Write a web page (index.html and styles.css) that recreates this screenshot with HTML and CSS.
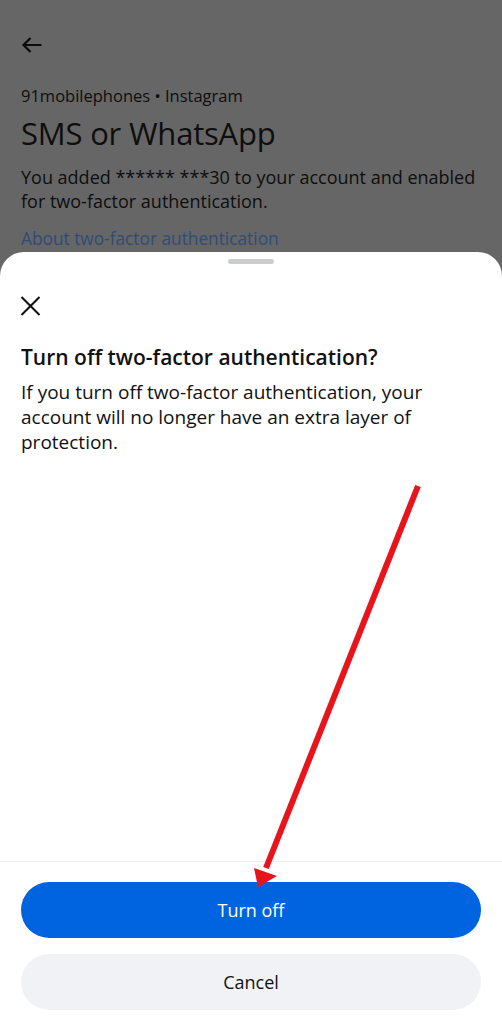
FILE: index.html
```html
<!DOCTYPE html>
<html lang="en">
<head>
    <meta charset="UTF-8">
    <meta name="viewport" content="width=device-width, initial-scale=1.0">
    <title>SMS or WhatsApp</title>
    <link rel="stylesheet" href="styles.css">
</head>
<body>

    <div class="screen">
        <div class="behind">
            <div class="back">
                <svg width="24" height="24" viewBox="0 0 24 24">
                    <path d="M21.5 12H3.5M10.5 5L3.5 12L10.5 19" fill="none" stroke="#0c0c0c" stroke-width="2.2"/>
                </svg>
            </div>
            <p class="crumb">91mobilephones • Instagram</p>
            <h1>SMS or WhatsApp</h1>
            <p class="desc">You added ****** ***30 to your account and enabled for two-factor authentication.</p>
            <p class="link">About two-factor authentication</p>
        </div>

        <div class="sheet">
            <div class="handle"></div>
            <div class="close">
                <svg width="21" height="20" viewBox="0 0 21 20">
                    <path d="M1.5 1L19.5 19M19.5 1L1.5 19" fill="none" stroke="#111" stroke-width="2.1"/>
                </svg>
            </div>
            <h2>Turn off two-factor authentication?</h2>
            <p class="sheet-text">If you turn off two-factor authentication, your account will no longer have an extra layer of protection.</p>

            <div class="spacer"></div>

            <div class="actions">
                <button class="btn primary">Turn off</button>
                <button class="btn secondary">Cancel</button>
            </div>
        </div>

        <svg class="annotation" width="502" height="1024" viewBox="0 0 502 1024">
            <line x1="418" y1="486" x2="266" y2="868" stroke="#e8141b" stroke-width="6"/>
            <polygon points="254,868 277,876 258,887" fill="#e8141b"/>
        </svg>
    </div>

</body>
</html>
```

FILE: styles.css
```css
body {
    margin: 0;
    font-family: "Open Sans", Roboto, sans-serif;
    color: #111;
}

.screen {
    position: relative;
    width: 502px;
    height: 1024px;
    background-color: #666666;
    display: flex;
    flex-direction: column;
    overflow: hidden;
}

.behind {
    padding: 33px 21px 0 21px;
    color: #0e0e0e;
}

.back {
    height: 24px;
    margin-left: -1px;
}

.crumb {
    margin: 29px 0 0 0;
    font-size: 16.5px;
    line-height: 20px;
}

h1 {
    margin: 9px 0 0 0;
    font-size: 31px;
    line-height: 36px;
    font-weight: 400;
    letter-spacing: -0.2px;
}

.desc {
    margin: 14px 0 0 0;
    font-size: 18px;
    line-height: 24px;
}

.link {
    margin: 14px 0 0 0;
    font-size: 17.3px;
    line-height: 24px;
    color: #2f4c77;
}

.sheet {
    flex: 1;
    margin-top: 1px;
    background-color: #fff;
    border-radius: 24px 24px 0 0;
    display: flex;
    flex-direction: column;
    padding: 0 21px;
}

.handle {
    width: 46px;
    height: 5px;
    border-radius: 3px;
    background-color: #cbcdd1;
    margin: 7px auto 0 auto;
}

.close {
    margin-top: 32px;
    height: 20px;
    margin-left: -1px;
}

h2 {
    margin: 28px 0 0 0;
    font-size: 21px;
    line-height: 26px;
    font-weight: 600;
}

.sheet-text {
    margin: 10px 0 0 0;
    font-size: 19px;
    line-height: 25px;
}

.spacer {
    flex: 1;
}

.actions {
    border-top: 1px solid #ebedf0;
    margin: 0 -21px;
    padding: 20px 21px 14px 21px;
    display: flex;
    flex-direction: column;
    gap: 16px;
}

.btn {
    height: 56px;
    border: none;
    border-radius: 28px;
    font-family: "Open Sans", Roboto, sans-serif;
    font-size: 18px;
}

.primary {
    background-color: #0064e0;
    color: #fff;
}

.secondary {
    background-color: #f1f2f5;
    color: #111;
}

.annotation {
    position: absolute;
    left: 0;
    top: 0;
    pointer-events: none;
}
```
